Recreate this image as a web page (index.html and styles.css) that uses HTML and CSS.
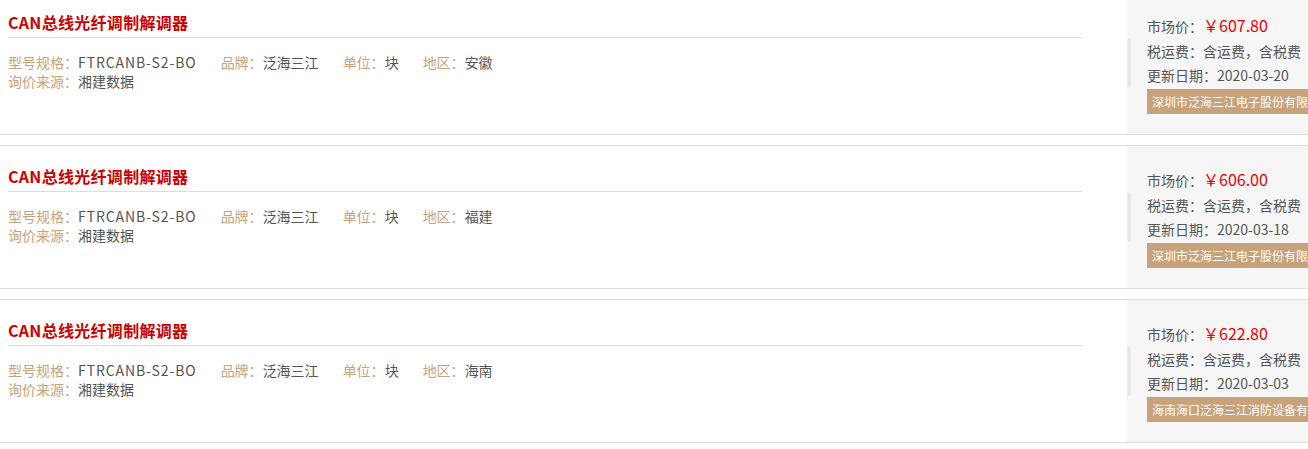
FILE: index.html
```html
<!DOCTYPE html>
<html lang="zh-CN">
<head>
<meta charset="UTF-8" />
<title>询价结果</title>
<link rel="stylesheet" href="styles.css">
</head>
<body>

<div class="list">

  <!-- 第一条 -->
  <div class="item">
    <div class="main">
      <h3 class="title">CAN总线光纤调制解调器</h3>
      <div class="specs">
        <span class="spec"><em>型号规格：</em><span class="model">FTRCANB-S2-BO</span></span>
        <span class="spec"><em>品牌：</em>泛海三江</span>
        <span class="spec"><em>单位：</em>块</span>
        <span class="spec"><em>地区：</em>安徽</span>
      </div>
      <div class="specs">
        <span class="spec"><em>询价来源：</em>湘建数据</span>
      </div>
    </div>
    <div class="side">
      <span class="handle"></span>
      <p class="price-row">市场价：<b>￥607.80</b></p>
      <p>税运费：含运费，含税费（13%）</p>
      <p>更新日期：2020-03-20</p>
      <div class="company">深圳市泛海三江电子股份有限公司</div>
    </div>
  </div>

  <!-- 第二条 -->
  <div class="item">
    <div class="main">
      <h3 class="title">CAN总线光纤调制解调器</h3>
      <div class="specs">
        <span class="spec"><em>型号规格：</em><span class="model">FTRCANB-S2-BO</span></span>
        <span class="spec"><em>品牌：</em>泛海三江</span>
        <span class="spec"><em>单位：</em>块</span>
        <span class="spec"><em>地区：</em>福建</span>
      </div>
      <div class="specs">
        <span class="spec"><em>询价来源：</em>湘建数据</span>
      </div>
    </div>
    <div class="side">
      <span class="handle"></span>
      <p class="price-row">市场价：<b>￥606.00</b></p>
      <p>税运费：含运费，含税费（13%）</p>
      <p>更新日期：2020-03-18</p>
      <div class="company">深圳市泛海三江电子股份有限公司</div>
    </div>
  </div>

  <!-- 第三条 -->
  <div class="item">
    <div class="main">
      <h3 class="title">CAN总线光纤调制解调器</h3>
      <div class="specs">
        <span class="spec"><em>型号规格：</em><span class="model">FTRCANB-S2-BO</span></span>
        <span class="spec"><em>品牌：</em>泛海三江</span>
        <span class="spec"><em>单位：</em>块</span>
        <span class="spec"><em>地区：</em>海南</span>
      </div>
      <div class="specs">
        <span class="spec"><em>询价来源：</em>湘建数据</span>
      </div>
    </div>
    <div class="side">
      <span class="handle"></span>
      <p class="price-row">市场价：<b>￥622.80</b></p>
      <p>税运费：含运费，含税费（13%）</p>
      <p>更新日期：2020-03-03</p>
      <div class="company">海南海口泛海三江消防设备有限公司</div>
    </div>
  </div>

</div>

</body>
</html>
```

FILE: styles.css
```css
* {
  margin: 0;
  padding: 0;
  box-sizing: border-box;
}
html, body {
  overflow: hidden;
}
body {
  font-family: "Noto Sans CJK SC", "Open Sans", sans-serif;
  font-size: 14px;
  color: #555;
  background: #fff;
  width: 1308px;
}

/* 列表（页面已向下滚动 9px） */
.list {
  margin-top: -9px;
}

.item {
  display: flex;
  height: 144px;
  border-top: 1px solid #ddd;
  border-bottom: 1px solid #ddd;
  margin-bottom: 10px;
}

/* 左侧信息 */
.main {
  flex: 0 0 1082px;
  padding: 18px 0 0 8px;
}
.title {
  font-size: 16px;
  font-weight: bold;
  color: #cc0000;
  line-height: 24px;
  letter-spacing: 0.3px;
  padding-bottom: 3px;
  border-bottom: 1px solid #ddd;
}
.specs {
  display: flex;
  line-height: 19px;
}
.specs:nth-of-type(1) {
  margin-top: 15px;
}
.spec {
  margin-right: 24px;
}
.spec em {
  font-style: normal;
  color: #c8a27c;
}
.model {
  letter-spacing: 0.9px;
}

/* 右侧价格区域 */
.side {
  position: relative;
  margin-left: 45px;
  flex: 0 0 260px;
  background: #f6f6f6;
  padding: 22px 0 0 20px;
  white-space: nowrap;
  color: #555;
}
.side p {
  line-height: 24.5px;
}
.price-row b {
  font-weight: normal;
  font-size: 16px;
  line-height: 20px;
  color: #e00;
}
.company {
  width: fit-content;
  margin-top: 1px;
  background: #c8a27a;
  color: #fff;
  font-size: 12px;
  line-height: 25px;
  padding: 0 5px;
}

/* 左边的滑块 */
.handle {
  position: absolute;
  left: 0;
  top: 46px;
  width: 4px;
  height: 50px;
  border-radius: 2px;
  background: #e6e6e6;
  border: 1px solid #ececec;
}
```
